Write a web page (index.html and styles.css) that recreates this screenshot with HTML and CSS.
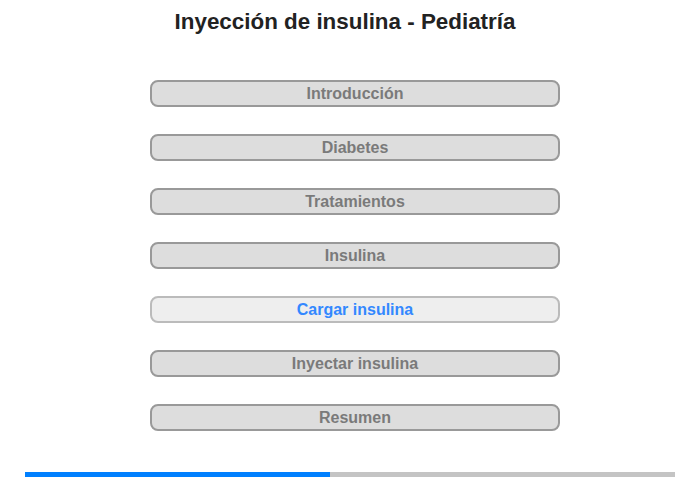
FILE: index.html
```html
<!DOCTYPE html>
<html lang="es">
<head>
    <meta charset="UTF-8">
    <meta name="viewport" content="width=device-width, initial-scale=1.0">
    <title>Inyección de insulina - Pediatría</title>
    <link rel="stylesheet" href="styles.css">
</head>
<body>
    <div id="page">
        <h1>Inyección de insulina - Pediatría</h1>

        <div id="menu">
            <button class="step">Introducción</button>
            <button class="step">Diabetes</button>
            <button class="step">Tratamientos</button>
            <button class="step">Insulina</button>
            <button class="step current">Cargar insulina</button>
            <button class="step">Inyectar insulina</button>
            <button class="step">Resumen</button>
        </div>

        <div id="progress">
            <div class="done" style="width: 305px;"></div>
        </div>
    </div>
</body>
</html>
```

FILE: styles.css
```css
* {
    font-family: "Liberation Sans", Arial, Helvetica, sans-serif;
    box-sizing: border-box;
}

body {
    margin: 0;
    background-color: #fff;
}

#page {
    width: 700px;
    height: 480px;
    display: flex;
    flex-direction: column;
    align-items: center;
}

h1 {
    margin: 9px 0 0 -10px;
    font-size: 22.4px;
    line-height: 26px;
    color: #222;
}

#menu {
    margin: 45px 0 0 10px;
    display: flex;
    flex-direction: column;
    gap: 27px;
}

.step {
    width: 410px;
    height: 27px;
    padding: 0;
    border: 2px solid #999;
    border-radius: 8px;
    background-color: #ddd;
    color: #7a7a7a;
    font-size: 16px;
    font-weight: bold;
    cursor: pointer;
}

.step.current {
    border-color: #bbb;
    background-color: #eee;
    color: #3388ff;
}

#progress {
    margin-top: 41px;
    width: 650px;
    height: 5px;
    background-color: #c4c4c4;
}

#progress .done {
    height: 100%;
    background-color: #0080ff;
}
```
